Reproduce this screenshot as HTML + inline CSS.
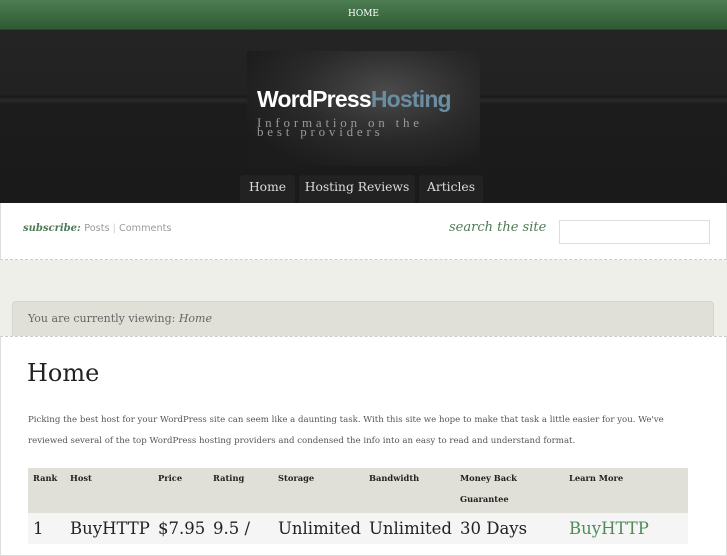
<!DOCTYPE html>
<html><head><style>
*{margin:0;padding:0;box-sizing:border-box}
body{width:727px;height:545px;overflow:hidden;background:#efefea;font-family:"DejaVu Serif","Liberation Serif",serif;position:relative}
.top{position:absolute;left:0;top:0;width:727px;height:30px;background:linear-gradient(#4d7d52,#2e5a34);border-bottom:1px solid #244a29;color:#fff;font-size:9px;text-align:center;line-height:29px}
.hdr{position:absolute;left:0;top:30px;width:727px;height:173px;background:linear-gradient(#242424 0,#222 64px,#1a1a1a 67px,#2a2a2a 70px,#1c1c1c 74px,#1a1a1a 173px)}
.ban{position:absolute;left:247px;top:51px;width:233px;height:115px;background:radial-gradient(ellipse at 60% 35%,#4a4a4a 0,#2a2a2a 45%,#1c1c1c 80%)}
.logo{position:absolute;left:257px;top:86px;font-family:"Liberation Sans",sans-serif;font-weight:bold;font-size:23px;color:#fff;letter-spacing:-0.8px}
.logo span{color:#6a8ea0}
.tag{position:absolute;left:257px;top:118px;font-size:13px;line-height:9px;letter-spacing:3.8px;color:#999;font-family:"Liberation Serif",serif}
.tab{position:absolute;top:175px;height:28px;background:#222;border-radius:4px 4px 0 0;color:#ddd;font-size:12.3px;line-height:25px;text-align:center;white-space:nowrap}
.sub{position:absolute;left:0;top:203px;width:727px;height:57px;background:#fff;border-left:1px solid #ddd;border-right:1px solid #ddd;border-bottom:1px dashed #ccc}
.bc{position:absolute;left:12px;top:301px;width:702px;height:36px;background:#e0dfd8;border:1px solid #d6d5ce;border-radius:4px 4px 0 0;color:#666;font-size:11px;padding-left:15px;line-height:34px}
.main{position:absolute;left:0;top:336px;width:727px;height:220px;background:#fff;border:1px solid #ddd;border-top:1px dashed #ccc}
h1{position:absolute;left:27px;top:359px;font-weight:normal;font-size:24px;color:#222}
.p{position:absolute;left:28px;top:410px;width:660px;font-size:8.6px;line-height:21px;color:#555}
table{position:absolute;left:28px;top:468px;width:660px;border-collapse:collapse;table-layout:fixed}
th{background:#e0dfd8;font-size:8.3px;text-align:left;vertical-align:top;line-height:21px;padding:0 5px;height:45px;color:#222}
td{background:#f5f5f5;font-size:16.5px;padding:6px 5px;color:#222;white-space:nowrap;overflow:visible}
</style></head><body>
<div class="top">HOME</div>
<div class="hdr"></div>
<div class="ban"></div>
<div class="logo">WordPress<span>Hosting</span></div>
<div class="tag">Information on the<br>best providers</div>
<div class="tab" style="left:240px;width:55px">Home</div>
<div class="tab" style="left:299px;width:116px">Hosting Reviews</div>
<div class="tab" style="left:419px;width:64px">Articles</div>
<div class="sub">
<div style="position:absolute;left:22px;top:20px;font-size:10px;font-style:italic;font-weight:bold;color:#4f7a56">subscribe: <span style="font-family:'DejaVu Sans',sans-serif;font-style:normal;font-weight:normal;color:#999;font-size:9.7px">Posts <span style="color:#ccc">|</span> Comments</span></div>
<div style="position:absolute;left:448px;top:17px;font-size:13px;font-style:italic;color:#4f7a56">search the site</div>
<div style="position:absolute;left:558px;top:17px;width:151px;height:24px;border:1px solid #ddd"></div>
</div>
<div class="bc">You are currently viewing: <i>Home</i></div>
<div class="main"></div>
<h1>Home</h1>
<div class="p">Picking the best host for your WordPress site can seem like a daunting task. With this site we hope to make that task a little easier for you. We've reviewed several of the top WordPress hosting providers and condensed the info into an easy to read and understand format.</div>
<table><colgroup><col style="width:37px"><col style="width:88px"><col style="width:55px"><col style="width:65px"><col style="width:91px"><col style="width:91px"><col style="width:109px"><col></colgroup>
<tr><th>Rank</th><th>Host</th><th>Price</th><th>Rating</th><th>Storage</th><th>Bandwidth</th><th>Money Back<br>Guarantee</th><th>Learn More</th></tr>
<tr><td>1</td><td>BuyHTTP</td><td>$7.95</td><td>9.5 /</td><td>Unlimited</td><td>Unlimited</td><td>30 Days</td><td style="color:#4f8a5a">BuyHTTP</td></tr></table>
</body></html>
